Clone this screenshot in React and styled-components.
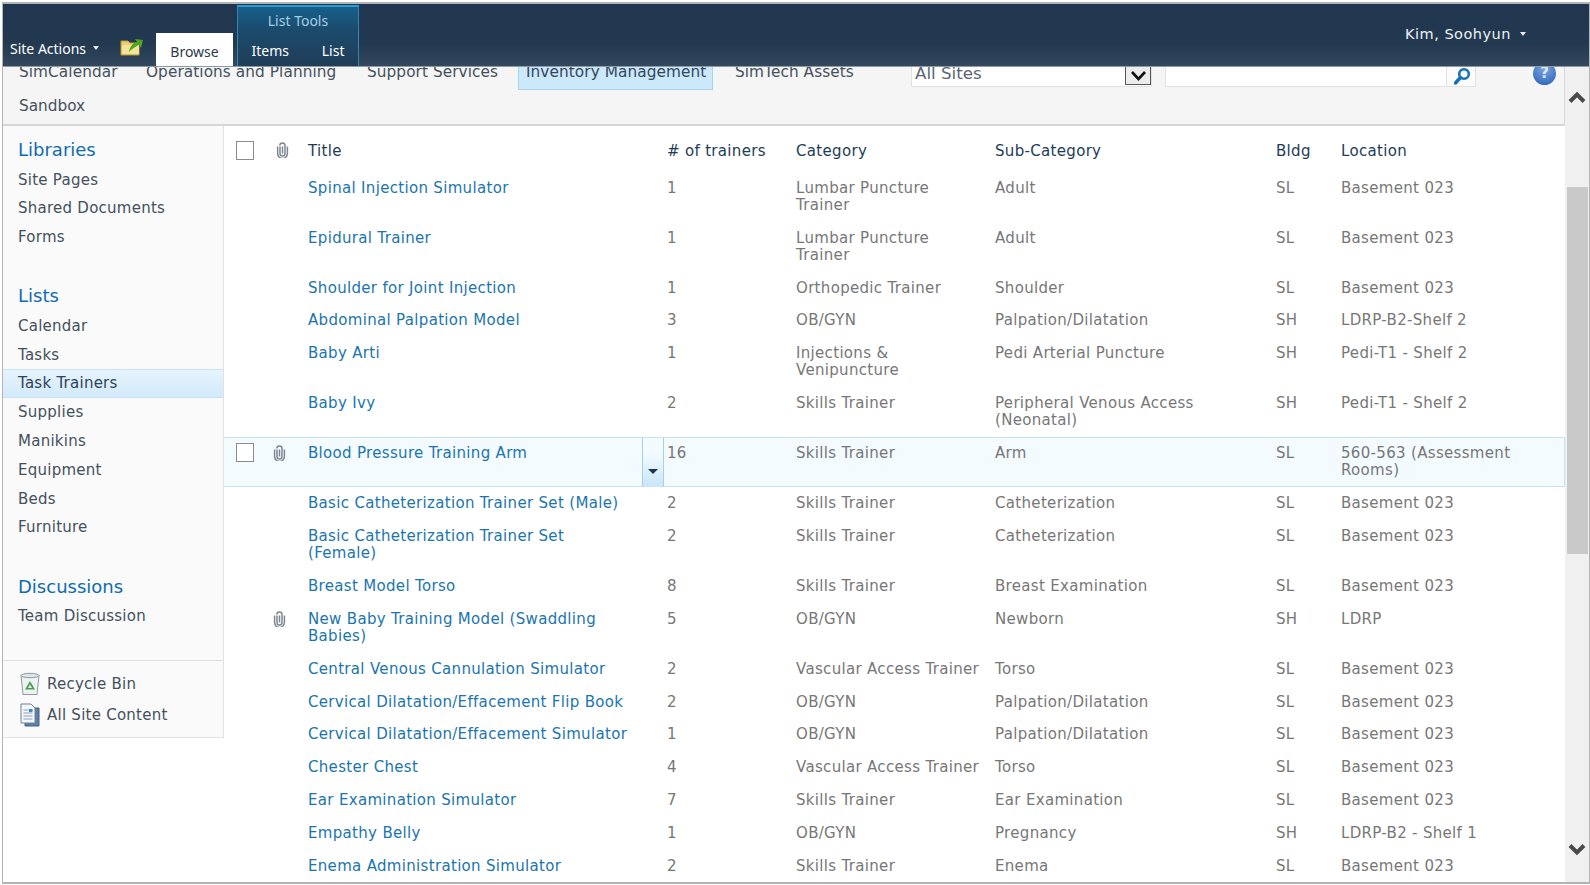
import styled, { createGlobalStyle } from "styled-components";

const GlobalStyle = createGlobalStyle`
  html, body {
    margin: 0;
    background: #fff;
    overflow: hidden;
  }
  * {
    box-sizing: border-box;
  }
  body {
    font-family: "DejaVu Sans", Verdana, sans-serif;
    font-size: 15px;
  }
`;

const Frame = styled.div`
  width: 1588px;
  height: 882px;
  margin: 2px 0 1px 2px;
  border: solid #b4b4b4;
  border-width: 2px 1px 2px 1.5px;
  display: flex;
  flex-direction: column;
  overflow: hidden;
`;

const Ribbon = styled.div`
  height: 63px;
  flex: none;
  display: flex;
  align-items: flex-end;
  position: relative;
  z-index: 2;
  background: linear-gradient(#203650 0, #223950 65%, #34495e 100%);
  border-bottom: 1px solid #8d99a4;
  color: #fff;
`;

const SiteActions = styled.div`
  display: flex;
  align-items: center;
  gap: 7px;
  width: 112px;
  height: 28px;
  padding-left: 7px;
  margin-bottom: 4px;
  font-family: "Noto Sans", Tahoma, sans-serif;
  font-size: 14px;
`;

const Caret = styled.span`
  width: 0;
  height: 0;
  border: 3.5px solid transparent;
  border-top: 4px solid ${(p) => p.$color || "#e8edf2"};
  border-bottom: 0;
`;

const FolderSlot = styled.div`
  width: 41px;
  height: 31px;
  padding-left: 5px;
`;

const BrowseTab = styled.div`
  width: 77px;
  height: 33px;
  background: #fff;
  color: #2e3a46;
  font-family: "Noto Sans", Tahoma, sans-serif;
  font-size: 14px;
  display: flex;
  align-items: center;
  justify-content: center;
  padding-top: 3px;
`;

const ContextGroup = styled.div`
  width: 122px;
  height: 61px;
  margin-left: 4px;
  background: linear-gradient(#16608c 0, #1b4a6c 40%, #203e58 100%);
  border: 1px solid #2f86b8;
  border-top: 2px solid #2b9ad0;
  border-bottom: 0;
  font-family: "Noto Sans", Tahoma, sans-serif;
  font-size: 14px;
  display: flex;
  flex-direction: column;
  align-items: center;
`;

const ContextTitle = styled.div`
  color: #a5cfe4;
  height: 30px;
  line-height: 27px;
`;

const ContextTabs = styled.div`
  display: flex;
  justify-content: space-between;
  width: 93px;
  padding-top: 4px;
`;

const UserMenu = styled.div`
  position: absolute;
  top: 0;
  right: 63px;
  height: 60px;
  display: flex;
  align-items: center;
  gap: 9px;
  font-size: 14.5px;
  letter-spacing: 0.5px;
  color: #edf1f5;
`;

const Below = styled.div`
  flex: 1;
  min-height: 0;
  display: flex;
`;

const Content = styled.div`
  flex: 1;
  min-width: 0;
  display: flex;
  flex-direction: column;
`;

const TopNav = styled.div`
  height: 59px;
  flex: none;
  background: #f5f5f5;
  border-bottom: 2px solid #d6d6d6;
  border-right: 1px solid #d6d6d6;
  overflow: hidden;
  position: relative;
`;

const NavRow = styled.div`
  display: flex;
  height: 23px;
  margin-left: 16px;
  color: #44505c;
  font-size: 15.3px;
  letter-spacing: 0.08px;
`;

const NavItem = styled.div`
  width: ${(p) => p.$w}px;
  padding-left: ${(p) => p.$pad || 0}px;
  line-height: 10px;
  white-space: nowrap;
  ${(p) =>
    p.$active &&
    `
    background: #cce8fb;
    border: 1px solid #a8d4ee;
    border-top: 0;
    margin-right: 22px;
    color: #33475b;
  `}
`;

const SandboxRow = styled.div`
  margin: 5px 0 0 16px;
  line-height: 22px;
  color: #44505c;
  font-size: 15.3px;
`;

const SearchArea = styled.div`
  position: absolute;
  top: 0;
  left: 908px;
  display: flex;
`;

const ScopeSelect = styled.div`
  width: 241px;
  height: 20px;
  background: #fff;
  border: 1px solid #e2e2e2;
  border-top: 0;
  padding-left: 3px;
  color: #5a6672;
  font-size: 16.7px;
  line-height: 12px;
  display: flex;
  justify-content: space-between;
`;

const SelectButton = styled.div`
  width: 26px;
  height: 18px;
  background: #ececec;
  border: 1px solid #555;
  border-top: 0;
  display: flex;
  align-items: center;
  justify-content: center;
`;

const SearchInput = styled.div`
  width: 282px;
  height: 20px;
  margin-left: 13px;
  background: #fff;
  border: 1px solid #e2e2e2;
  border-top: 0;
`;

const SearchButton = styled.div`
  width: 29px;
  height: 20px;
  padding-left: 2px;
  background: #fbfbfb;
  border: 1px solid #e2e2e2;
  border-top: 0;
  border-left: 0;
  display: flex;
  justify-content: center;
`;

const HelpIcon = styled.div`
  margin-left: 57px;
  margin-top: -5px;
  width: 23px;
  height: 23px;
  border-radius: 50%;
  background: radial-gradient(circle at 50% 30%, #7ea6e0, #3a70c0 75%);
  color: #dce8f8;
  font-weight: 700;
  font-size: 15px;
  line-height: 23px;
  text-align: center;
`;

const Body = styled.div`
  flex: 1;
  min-height: 0;
  display: flex;
  overflow: hidden;
`;

const Sidebar = styled.div`
  width: 221px;
  flex: none;
  height: 612px;
  padding-top: 9px;
  background: #fafafa;
  border-right: 1px solid #e2e2e2;
  border-bottom: 1px solid #e2e2e2;
  font-size: 15px;
  letter-spacing: 0.25px;
`;

const SideGroup = styled.div`
  margin-bottom: ${(p) => p.$gap || 29.5}px;
`;

const SideHeading = styled.div`
  height: 30.5px;
  line-height: 29px;
  padding-left: 15px;
  color: #0f6cb0;
  font-size: 18px;
  letter-spacing: 0;
`;

const SideItem = styled.div`
  height: 28.8px;
  line-height: 28px;
  padding-left: 15px;
  color: #44505c;
  ${(p) =>
    p.$active &&
    `
    background: linear-gradient(#e6f4fd, #d2eafa);
    border-top: 1px solid #c6e2f4;
    border-bottom: 1px solid #c6e2f4;
    color: #2f4256;
    line-height: 26px;
  `}
`;

const SideFooter = styled.div`
  border-top: 1px solid #dedede;
  padding: 7px 0 0 16px;
`;

const FooterLink = styled.div`
  display: flex;
  align-items: center;
  gap: 6px;
  height: 31.5px;
  color: #44505c;
`;

const Main = styled.div`
  flex: 1;
  min-width: 0;
  overflow: hidden;
  font-size: 15px;
  letter-spacing: 0.32px;
`;

const gridColumns = "84px 359px 129px 199px 281px 65px 1fr";

const HeadRow = styled.div`
  display: grid;
  grid-template-columns: ${gridColumns};
  height: 45.8px;
  line-height: 50px;
  color: #1d3c58;
`;

const IconCell = styled.div`
  display: flex;
  align-items: flex-start;
  padding-left: 12px;
  gap: ${(p) => p.$gap || 20}px;
  padding-top: ${(p) => p.$top || 0}px;
`;

const CheckBox = styled.div`
  width: 18px;
  height: 18.5px;
  margin-top: ${(p) => p.$shift || 0}px;
  background: #fff;
  border: 1.5px solid #8c8c8c;
  flex: none;
`;

const ClipSlot = styled.div`
  display: flex;
  width: 13px;
  height: 17px;
  margin-left: ${(p) => p.$left || 0}px;
  flex: none;
  padding-top: ${(p) => p.$top || 0}px;
`;

const Row = styled.div`
  display: grid;
  grid-template-columns: ${gridColumns};
  padding: 7.8px 0;
  line-height: 17.2px;
  color: #777;
  position: relative;
  ${(p) =>
    p.$active &&
    `
    background: #f4fbff;
    box-shadow: inset 0 1px 0 #c6e3f5, inset 0 -1px 0 #c6e3f5, inset -1px 0 0 #c6e3f5;
  `}
`;

const Cell = styled.div`
  padding-right: ${(p) => p.$pr || 0}px;
`;

const TitleLink = styled.a`
  display: block;
  color: #1b75ae;
  padding-right: 34px;
`;

const RowMenu = styled.div`
  position: absolute;
  top: 1px;
  bottom: 0;
  left: 418px;
  width: 22px;
  background: linear-gradient(#f4fbff 30%, #c8e5f9);
  border: solid #a9cfe8;
  border-width: 0 1px;
  display: flex;
  align-items: center;
  justify-content: center;
  padding-top: 18px;
`;

const MenuArrow = styled.span`
  width: 0;
  height: 0;
  border: 5px solid transparent;
  border-top: 5px solid #1b3550;
  border-bottom: 0;
`;

const Scrollbar = styled.div`
  width: 24px;
  flex: none;
  background: #f0f0f0;
  display: flex;
  flex-direction: column;
  align-items: center;
  padding: 24px 0 22px;
`;

const Thumb = styled.div`
  width: 21px;
  height: 367px;
  margin-top: 83px;
  background: #c9c9c9;
`;

const DownArrow = styled.div`
  margin-top: auto;
`;

const ChevronUp = () => (
  <svg width="18" height="13" viewBox="0 0 18 13">
    <path d="M2 10.5 9 3.5l7 7" fill="none" stroke="#4a4a4a" strokeWidth="4" />
  </svg>
);

const ChevronDown = () => (
  <svg width="18" height="13" viewBox="0 0 18 13">
    <path d="M2 2.5 9 9.5l7-7" fill="none" stroke="#4a4a4a" strokeWidth="4" />
  </svg>
);

const Paperclip = () => (
  <svg width="13" height="16" viewBox="0 0 13 16">
    <path
      d="M4 4.5v7a2.5 2.5 0 0 0 5 0V3.6a2.6 2.6 0 0 0-5.2 0M6.5 4.5v7M1.6 4.5v7a4.9 4.9 0 0 0 9.8 0V4.5"
      fill="none"
      stroke="#7d8791"
      strokeWidth="1.5"
    />
  </svg>
);

const FolderUp = () => (
  <svg width="24" height="22" viewBox="0 0 24 22">
    <path d="M1 6h7l2 2h9v12H1z" fill="#e9cf6e" stroke="#b99a3c" />
    <path d="M2 10h17v9H2z" fill="#f4e39b" />
    <path d="M9 17c1-6 4-9 8-10l-2-3 8 1-2 8-2-3c-3 1-6 3-10 7z" fill="#4fa51f" />
  </svg>
);

const SearchGlass = () => (
  <svg width="20" height="19" viewBox="0 0 20 19">
    <circle cx="12" cy="7" r="4.8" fill="none" stroke="#1572b8" strokeWidth="2.6" />
    <path d="M8.5 10.5 3.5 16" stroke="#1572b8" strokeWidth="3.4" strokeLinecap="round" />
  </svg>
);

const RecycleBin = () => (
  <svg width="22" height="24" viewBox="0 0 22 24">
    <path d="M2 3.5h18l-2 19H4z" fill="#eef1f2" stroke="#8f9aa0" />
    <ellipse cx="11" cy="3.5" rx="9" ry="2.2" fill="#dfe4e6" stroke="#8f9aa0" />
    <path d="M11 9l5 8.5H6z" fill="#49a04a" />
    <path d="M11 12.5l2 3.5H9z" fill="#eef1f2" />
  </svg>
);

const SitePages = () => (
  <svg width="22" height="24" viewBox="0 0 22 24">
    <path d="M6 5h14v18H6z" fill="#5d7fa6" stroke="#46617f" />
    <path d="M2 1h10l4 4v15H2z" fill="#f4f7fb" stroke="#6e8198" />
    <path d="M4.5 7h5M4.5 10h9M4.5 13h9M4.5 16h9" stroke="#8fa0b4" strokeWidth="1.1" />
    <rect x="10" y="6" width="3.5" height="3" fill="#3d86d0" />
  </svg>
);

const trainers = [
  ["Spinal Injection Simulator", "1", "Lumbar Puncture Trainer", "Adult", "SL", "Basement 023"],
  ["Epidural Trainer", "1", "Lumbar Puncture Trainer", "Adult", "SL", "Basement 023"],
  ["Shoulder for Joint Injection", "1", "Orthopedic Trainer", "Shoulder", "SL", "Basement 023"],
  ["Abdominal Palpation Model", "3", "OB/GYN", "Palpation/Dilatation", "SH", "LDRP-B2-Shelf 2"],
  ["Baby Arti", "1", "Injections & Venipuncture", "Pedi Arterial Puncture", "SH", "Pedi-T1 - Shelf 2"],
  ["Baby Ivy", "2", "Skills Trainer", "Peripheral Venous Access (Neonatal)", "SH", "Pedi-T1 - Shelf 2"],
  ["Blood Pressure Training Arm", "16", "Skills Trainer", "Arm", "SL", "560-563 (Assessment Rooms)", "active"],
  ["Basic Catheterization Trainer Set (Male)", "2", "Skills Trainer", "Catheterization", "SL", "Basement 023"],
  ["Basic Catheterization Trainer Set (Female)", "2", "Skills Trainer", "Catheterization", "SL", "Basement 023"],
  ["Breast Model Torso", "8", "Skills Trainer", "Breast Examination", "SL", "Basement 023"],
  ["New Baby Training Model (Swaddling Babies)", "5", "OB/GYN", "Newborn", "SH", "LDRP", "clip"],
  ["Central Venous Cannulation Simulator", "2", "Vascular Access Trainer", "Torso", "SL", "Basement 023"],
  ["Cervical Dilatation/Effacement Flip Book", "2", "OB/GYN", "Palpation/Dilatation", "SL", "Basement 023"],
  ["Cervical Dilatation/Effacement Simulator", "1", "OB/GYN", "Palpation/Dilatation", "SL", "Basement 023"],
  ["Chester Chest", "4", "Vascular Access Trainer", "Torso", "SL", "Basement 023"],
  ["Ear Examination Simulator", "7", "Skills Trainer", "Ear Examination", "SL", "Basement 023"],
  ["Empathy Belly", "1", "OB/GYN", "Pregnancy", "SH", "LDRP-B2 - Shelf 1"],
  ["Enema Administration Simulator", "2", "Skills Trainer", "Enema", "SL", "Basement 023"],
];

const sideGroups = [
  { title: "Libraries", items: ["Site Pages", "Shared Documents", "Forms"] },
  {
    title: "Lists",
    items: ["Calendar", "Tasks", "Task Trainers", "Supplies", "Manikins", "Equipment", "Beds", "Furniture"],
  },
  { title: "Discussions", items: ["Team Discussion"], gap: 29 },
];

const TrainerRow = ({ row }) => {
  const [title, count, category, sub, bldg, location, flag] = row;
  const active = flag === "active";
  return (
    <Row $active={active}>
      <IconCell $gap={19}>
        {active && <CheckBox $shift={-2} />}
        {active && <ClipSlot><Paperclip /></ClipSlot>}
        {flag === "clip" && <ClipSlot $left={37}><Paperclip /></ClipSlot>}
      </IconCell>
      <TitleLink>{title}</TitleLink>
      <Cell>{count}</Cell>
      <Cell $pr={12}>{category}</Cell>
      <Cell>{sub}</Cell>
      <Cell>{bldg}</Cell>
      <Cell $pr={40}>{location}</Cell>
      {active && (
        <RowMenu>
          <MenuArrow />
        </RowMenu>
      )}
    </Row>
  );
};

export default function App() {
  return (
    <>
      <GlobalStyle />
      <Frame>
        <Ribbon>
          <SiteActions>
            Site Actions <Caret />
          </SiteActions>
          <FolderSlot>
            <FolderUp />
          </FolderSlot>
          <BrowseTab>Browse</BrowseTab>
          <ContextGroup>
            <ContextTitle>List Tools</ContextTitle>
            <ContextTabs>
              <span>Items</span>
              <span>List</span>
            </ContextTabs>
          </ContextGroup>
          <UserMenu>
            Kim, Soohyun <Caret />
          </UserMenu>
        </Ribbon>
        <Below>
          <Content>
            <TopNav>
              <NavRow>
                <NavItem $w={127}>SimCalendar</NavItem>
                <NavItem $w={221}>Operations and Planning</NavItem>
                <NavItem $w={151}>Support Services</NavItem>
                <NavItem $w={195} $pad={7} $active>Inventory Management</NavItem>
                <NavItem $w={150}>SimTech Assets</NavItem>
              </NavRow>
              <SandboxRow>Sandbox</SandboxRow>
              <SearchArea>
                <ScopeSelect>
                  All Sites
                  <SelectButton>
                    <svg width="17" height="12" viewBox="0 0 17 12">
                      <path d="M2 2 8.5 9 15 2" fill="none" stroke="#111" strokeWidth="2.6" />
                    </svg>
                  </SelectButton>
                </ScopeSelect>
                <SearchInput />
                <SearchButton>
                  <SearchGlass />
                </SearchButton>
                <HelpIcon>?</HelpIcon>
              </SearchArea>
            </TopNav>
            <Body>
              <Sidebar>
                {sideGroups.map((group) => (
                  <SideGroup key={group.title} $gap={group.gap}>
                    <SideHeading>{group.title}</SideHeading>
                    {group.items.map((item) => (
                      <SideItem key={item} $active={item === "Task Trainers"}>
                        {item}
                      </SideItem>
                    ))}
                  </SideGroup>
                ))}
                <SideFooter>
                  <FooterLink>
                    <RecycleBin /> Recycle Bin
                  </FooterLink>
                  <FooterLink>
                    <SitePages /> All Site Content
                  </FooterLink>
                </SideFooter>
              </Sidebar>
              <Main>
                <HeadRow>
                  <IconCell $gap={22} $top={15}>
                    <CheckBox />
                    <ClipSlot $top={1}><Paperclip /></ClipSlot>
                  </IconCell>
                  <div>Title</div>
                  <div># of trainers</div>
                  <div>Category</div>
                  <div>Sub-Category</div>
                  <div>Bldg</div>
                  <div>Location</div>
                </HeadRow>
                {trainers.map((row) => (
                  <TrainerRow key={row[0]} row={row} />
                ))}
              </Main>
            </Body>
          </Content>
          <Scrollbar>
            <ChevronUp />
            <Thumb />
            <DownArrow>
              <ChevronDown />
            </DownArrow>
          </Scrollbar>
        </Below>
      </Frame>
    </>
  );
}
